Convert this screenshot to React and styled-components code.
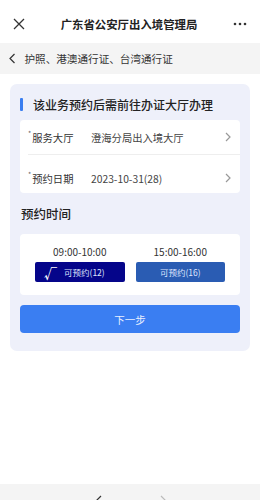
import React from "react";
import styled, { createGlobalStyle } from "styled-components";

const GlobalStyle = createGlobalStyle`
    body {
        margin: 0;
        background: #ffffff;
        font-family: "Noto Sans CJK SC", "Noto Sans", sans-serif;
    }
`
const Page = styled.div`
    width: 260px;
    height: 500px;
    display: flex;
    flex-direction: column;
    background: #ffffff;
    overflow: hidden;
`
const TopBar = styled.div`
    height: 39px;
    flex-shrink: 0;
    display: flex;
    align-items: center;
    padding: 0 13px 0 13px;
    box-sizing: border-box;
    margin-top: 4px;
`
const Title = styled.div`
    flex: 1;
    text-align: center;
    font-size: 11.4px;
    font-weight: 700;
    color: #222;
`
const Panel = styled.div`
    background: #ffffff;
    border-radius: 4px;
`
const SubNav = styled.div`
    height: 31px;
    flex-shrink: 0;
    display: flex;
    align-items: center;
    gap: 9px;
    padding-left: 9px;
    background: #f4f4f4;
    font-size: 10.6px;
    color: #333;
`
const Content = styled.div`
    padding: 10px 10px 0;
`
const Card = styled.div`
    background: #eef0fa;
    border-radius: 7px;
    padding: 12px 10px 18px;
`
const Heading = styled.div`
    display: flex;
    align-items: center;
    gap: 10px;
    height: 16px;
    font-size: 12px;
    font-weight: 500;
    color: #222;
    margin-bottom: 8px;
`
const HeadBar = styled.span`
    width: 3px;
    height: 13px;
    background: #3a7ef0;
    border-radius: 1px;
`
const Row = styled.div`
    height: ${p => p.$last ? 30 : 34}px;
    padding-top: ${p => p.$last ? 8 : 0}px;
    box-sizing: content-box;
    margin: 0 0 0 8px;
    display: flex;
    align-items: center;
    font-size: 10.3px;
    border-bottom: ${p => p.$last ? "none" : "1px solid #eeeeee"};
`
const Label = styled.div`
    width: 63px;
    color: #333;
    display: flex;
    align-items: flex-start;
`
const Star = styled.span`
    font-size: 7px;
    color: #666;
    line-height: 7px;
    margin-right: 1px;
`
const Value = styled.div`
    flex: 1;
    color: #444;
`
const Chevron = styled.div`
    width: 15px;
    display: flex;
    align-items: center;
`
const SectionTitle = styled.div`
    height: 41px;
    display: flex;
    align-items: center;
    padding-left: 1px;
    font-size: 12.5px;
    font-weight: 500;
    color: #222;
`
const SlotPanel = styled(Panel)`
    display: grid;
    grid-template-columns: 1fr 1fr;
    gap: 11px;
    padding: 10px 15px 13px;
`
const Slot = styled.div`
    display: flex;
    flex-direction: column;
    align-items: center;
    gap: 3px;
`
const SlotTime = styled.div`
    font-size: 10px;
    color: #333;
    height: 15px;
    line-height: 15px;
`
const SlotButton = styled.div`
    width: 100%;
    height: 20px;
    border-radius: 2px;
    background: ${p => p.$selected ? "#05058a" : "#2a5cb3"};
    color: #dfe6ff;
    font-size: 8.5px;
    display: flex;
    align-items: center;
    justify-content: ${p => p.$selected ? "flex-start" : "center"};
    padding-left: ${p => p.$selected ? "9px" : "0"};
    box-sizing: border-box;
    gap: 7px;
`
const Check = styled.span`
    font-size: 13px;
    font-weight: 700;
    color: #ffffff;
    line-height: 13px;
`
const NextButton = styled.div`
    margin-top: 10px;
    height: 28px;
    border-radius: 4px;
    background: #3a7ef2;
    color: #e8efff;
    font-size: 10.5px;
    display: flex;
    align-items: center;
    justify-content: center;
`
const Spacer = styled.div`
    flex: 1;
`
const BottomBar = styled.div`
    height: 16px;
    flex-shrink: 0;
    background: #f4f4f4;
    display: flex;
    justify-content: center;
    gap: 58px;
    padding-top: 11px;
    padding-left: 2px;
    box-sizing: border-box;
    overflow: hidden;
`

const CloseIcon = () => (
    <svg width="12" height="12" viewBox="0 0 12 12">
        <path d="M1 1 L11 11 M11 1 L1 11" stroke="#333" strokeWidth="1.3" />
    </svg>
)
const MoreIcon = () => (
    <svg width="14" height="4" viewBox="0 0 14 4">
        <circle cx="2" cy="2" r="1.3" fill="#333" />
        <circle cx="7" cy="2" r="1.3" fill="#333" />
        <circle cx="12" cy="2" r="1.3" fill="#333" />
    </svg>
)
const Arrow = ({ dir = "right", color = "#999", size = 8 }) => (
    <svg width={size / 2 + 2} height={size + 2} viewBox={`0 0 ${size / 2 + 2} ${size + 2}`}>
        <path
            d={dir === "right"
                ? `M1 1 L${size / 2 + 1} ${size / 2 + 1} L1 ${size + 1}`
                : `M${size / 2 + 1} 1 L1 ${size / 2 + 1} L${size / 2 + 1} ${size + 1}`}
            stroke={color} strokeWidth="1.2" fill="none" />
    </svg>
)

const App = () => {
    return (
        <Page>
            <GlobalStyle />
            <TopBar>
                <CloseIcon />
                <Title>广东省公安厅出入境管理局</Title>
                <MoreIcon />
            </TopBar>
            <SubNav>
                <Arrow dir="left" color="#333" size={9} />
                <span>护照、港澳通行证、台湾通行证</span>
            </SubNav>
            <Content>
                <Card>
                    <Heading>
                        <HeadBar />
                        该业务预约后需前往办证大厅办理
                    </Heading>
                    <Panel>
                        <Row>
                            <Label><Star>*</Star>服务大厅</Label>
                            <Value>澄海分局出入境大厅</Value>
                            <Chevron><Arrow size={8} /></Chevron>
                        </Row>
                        <Row $last>
                            <Label><Star>*</Star>预约日期</Label>
                            <Value>2023-10-31(28)</Value>
                            <Chevron><Arrow size={8} /></Chevron>
                        </Row>
                    </Panel>
                    <SectionTitle>预约时间</SectionTitle>
                    <SlotPanel>
                        <Slot>
                            <SlotTime>09:00-10:00</SlotTime>
                            <SlotButton $selected>
                                <Check>√</Check>
                                可预约(12)
                            </SlotButton>
                        </Slot>
                        <Slot>
                            <SlotTime>15:00-16:00</SlotTime>
                            <SlotButton>可预约(16)</SlotButton>
                        </Slot>
                    </SlotPanel>
                    <NextButton>下一步</NextButton>
                </Card>
            </Content>
            <Spacer />
            <BottomBar>
                <Arrow dir="left" color="#333" size={14} />
                <Arrow dir="right" color="#bbb" size={14} />
            </BottomBar>
        </Page>
    );
}

export default App;
